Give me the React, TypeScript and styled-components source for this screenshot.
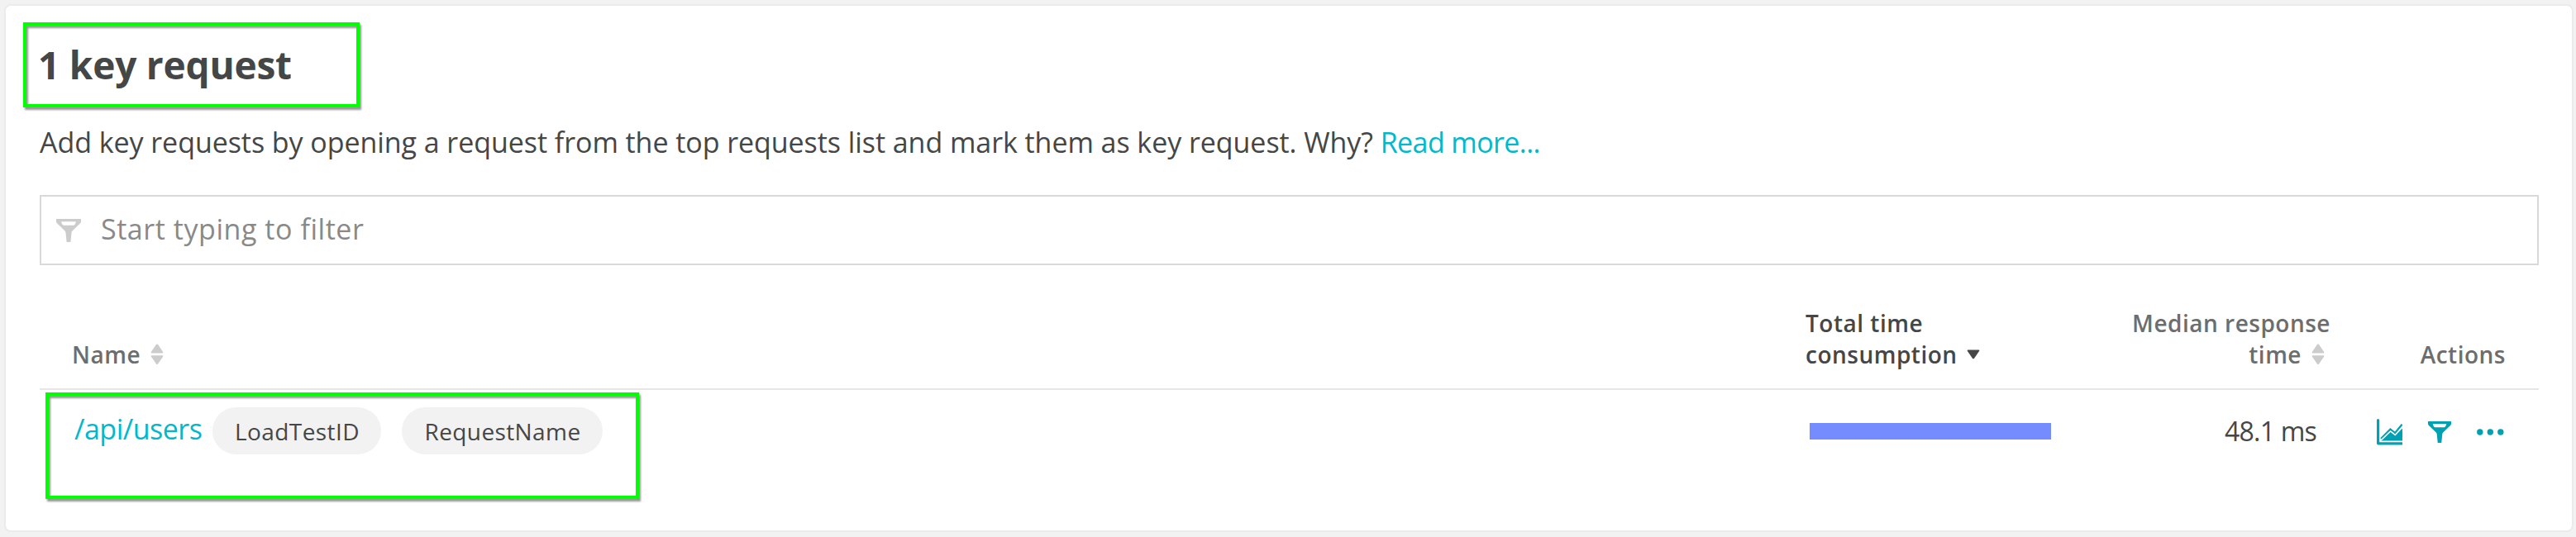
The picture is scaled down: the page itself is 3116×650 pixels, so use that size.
import React from 'react';
import styled, { createGlobalStyle } from 'styled-components';

const GlobalStyle = createGlobalStyle`
  * { box-sizing: border-box; }
  body {
    margin: 0;
    background: #f2f2f2;
    font-family: 'Open Sans', 'Noto Sans', sans-serif;
    color: #454646;
  }
`;

const Page = styled.main`
  height: 650px;
  padding: 5px 3px 6px 5px;
  overflow: hidden;
`;

const Card = styled.section`
  height: 639px;
  border: 2px solid #ebebeb;
  border-radius: 8px;
  background: #fff;
  padding: 41px 40px 0 41px;
`;

const Title = styled.h1`
  position: relative;
  margin: 0;
  text-indent: -2px;
  font-size: 46px;
  font-weight: 700;
  line-height: 60px;
  letter-spacing: -0.2px;
`;

const Intro = styled.p`
  margin: 44px 0 0;
  font-size: 34px;
  line-height: 40px;
  letter-spacing: -0.06px;
  white-space: nowrap;
`;

const Link = styled.a<{ $tracking: number }>`
  color: #00b9cc;
  font-size: 34px;
  text-decoration: none;
  letter-spacing: ${(p) => p.$tracking}px;
`;

const FilterField = styled.div`
  display: flex;
  align-items: center;
  height: 85px;
  margin-top: 44px;
  padding: 0 18px;
  border: 2px solid #d9d9d9;
  color: #898989;
`;

const Placeholder = styled.span`
  margin: 0 0 3px 24px;
  font-size: 34px;
  line-height: 40px;
  letter-spacing: 0.55px;
`;

const Table = styled.div`
  position: relative;
`;

const Row = styled.div`
  display: grid;
  grid-template-columns: 2136px 393px 242px 1fr;
`;

const HeaderRow = styled(Row)`
  align-items: end;
  height: 151px;
  padding-bottom: 22px;
  border-bottom: 2px solid #e6e6e6;
`;

const BodyRow = styled(Row)`
  padding-top: 20px;
  height: 130px;
  align-items: start;
`;

const HeaderCell = styled.div<{ $active?: boolean; $align?: 'right'; $start?: number; $end?: number }>`
  padding-left: ${(p) => p.$start ?? 0}px;
  padding-right: ${(p) => p.$end ?? 0}px;
  font-size: 28px;
  font-weight: 600;
  line-height: 38px;
  letter-spacing: 0.5px;
  white-space: nowrap;
  color: ${(p) => (p.$active ? '#454646' : '#6d6d6d')};
  text-align: ${(p) => p.$align ?? 'left'};
`;

const SortLine = styled.span<{ $align?: 'right'; $gap: number }>`
  display: flex;
  align-items: center;
  gap: ${(p) => p.$gap}px;
  justify-content: ${(p) => (p.$align === 'right' ? 'flex-end' : 'flex-start')};
  padding-right: ${(p) => (p.$align === 'right' ? 7 : 0)}px;
`;

const NameCell = styled.div`
  display: flex;
  align-items: center;
  height: 59px;
  padding-left: 42px;
`;

const RequestLink = styled(Link)`
  width: 167px;
  line-height: 40px;
  margin-bottom: 5px;
`;

const Tag = styled.span<{ $width: number }>`
  display: flex;
  align-items: center;
  justify-content: center;
  width: ${(p) => p.$width}px;
  height: 57px;
  margin-right: 25px;
  padding-left: 1px;
  border-radius: 29px;
  background: #f2f2f2;
  font-size: 28px;
  letter-spacing: 0.4px;
`;

const BarCell = styled.div`
  padding: 20px 0 0 5px;
`;

const Bar = styled.div`
  width: 292px;
  height: 20px;
  background: #748cff;
`;

const ValueCell = styled.div`
  padding: 10px 17px 0 0;
  font-size: 32px;
  line-height: 40px;
  letter-spacing: -0.8px;
  text-align: right;
`;

const ActionsCell = styled.div`
  display: flex;
  align-items: flex-start;
  justify-content: flex-end;
  padding: 15px 42px 0 0;
`;

const FunnelAction = styled.span`
  display: flex;
  margin: 3px 31px 0 31px;
`;

const DotsAction = styled.span`
  display: flex;
  padding-top: 12px;
`;

const Highlight = styled.div<{ $x: number; $y: number; $w: number; $h: number }>`
  position: absolute;
  left: ${(p) => p.$x}px;
  top: ${(p) => p.$y}px;
  width: ${(p) => p.$w}px;
  height: ${(p) => p.$h}px;
  border: 4px solid #00ff00;
  filter: drop-shadow(2px 3px 1px rgba(0, 0, 0, 0.42));
  pointer-events: none;
`;

const Funnel = ({ width, height, color }: { width: number; height: number; color: string }) => (
  <svg width={width} height={height} viewBox="0 0 30 28" preserveAspectRatio="none" fill={color} fillRule="evenodd">
    <path d="M0 0H30V3.2C30 4 29.6 4.7 29 5.3L19.5 14.6C18.9 15.3 18.6 16 18.5 17L17.4 28H12.6L11.5 17C11.4 16 11.1 15.3 10.5 14.6L1 5.3C.4 4.7 0 4 0 3.2ZM6.2 3.2C6.4 5.3 7.5 7.8 9.5 7.8H20.5C22.5 7.8 23.6 5.3 23.8 3.2Z" />
  </svg>
);

const Sorter = () => (
  <svg width="16" height="26" viewBox="0 0 16 26" fill="#ccc">
    <path d="M7.1 .8Q8 0 8.9 .8L15.2 10Q15.8 11.4 14.6 11.4H1.4Q.2 11.4 .8 10Z" />
    <path d="M7.1 24.8Q8 25.6 8.9 24.8L15.2 15.6Q15.8 14.2 14.6 14.2H1.4Q.2 14.2 .8 15.6Z" />
  </svg>
);

const SortedDown = () => (
  <svg width="16" height="12" viewBox="0 0 16 12" fill="#454646">
    <path d="M1.3 .4H14.7Q15.8 .5 15.2 1.7L8.9 10.9Q8 11.8 7.1 10.9L.8 1.7Q.2 .5 1.3 .4Z" />
  </svg>
);

const ChartIcon = () => (
  <svg width="31" height="32" viewBox="0 0 31 32" fill="#00a1b2">
    <path d="M0 1.5Q0 0 1.6 0T3.2 1.5V28.2H31V31.6H1.8Q0 31.6 0 29.8Z" />
    <path d="M5 26.4L16.7 15.4L22.3 20L31 11.2V26.4Z" />
    <path d="M5 24L16.4 12.6L22 17.2L30.6 6.6" fill="none" stroke="#00a1b2" strokeWidth="2.3" />
    <path d="M5 26L16.6 14.9L22.2 19.4L31 10.2" fill="none" stroke="#fff" strokeWidth="1.5" />
  </svg>
);

const Dots = () => (
  <svg width="33" height="8" viewBox="0 0 33 8" fill="#00a1b2">
    <circle cx="3.8" cy="4" r="3.7" />
    <circle cx="16.3" cy="4" r="3.7" />
    <circle cx="28.8" cy="4" r="3.7" />
  </svg>
);

export default function App() {
  return (
    <Page>
      <GlobalStyle />
      <Card>
        <Title>
          1 key request
          <Highlight $x={-20} $y={-21} $w={407} $h={103} />
        </Title>
        <Intro>
          Add key requests by opening a request from the top requests list and mark them as key request. Why?{' '}
          <Link $tracking={-0.6}>Read more...</Link>
        </Intro>
        <FilterField>
          <Funnel width={30} height={28} color="#ccc" />
          <Placeholder>Start typing to filter</Placeholder>
        </FilterField>
        <Table>
          <HeaderRow>
            <HeaderCell $start={39}>
              <SortLine $gap={12}>
                Name <Sorter />
              </SortLine>
            </HeaderCell>
            <HeaderCell $active>
              Total time
              <SortLine $gap={11}>
                consumption <SortedDown />
              </SortLine>
            </HeaderCell>
            <HeaderCell $align="right">
              Median response
              <SortLine $align="right" $gap={12}>
                time <Sorter />
              </SortLine>
            </HeaderCell>
            <HeaderCell $align="right" $end={40}>Actions</HeaderCell>
          </HeaderRow>
          <BodyRow>
            <NameCell>
              <RequestLink $tracking={-0.5}>/api/users</RequestLink>
              <Tag $width={204}>LoadTestID</Tag>
              <Tag $width={243}>RequestName</Tag>
            </NameCell>
            <BarCell>
              <Bar />
            </BarCell>
            <ValueCell>48.1 ms</ValueCell>
            <ActionsCell>
              <ChartIcon />
              <FunnelAction>
                <Funnel width={28} height={26} color="#00a1b2" />
              </FunnelAction>
              <DotsAction>
                <Dots />
              </DotsAction>
            </ActionsCell>
          </BodyRow>
          <Highlight $x={7} $y={154} $w={718} $h={129} />
        </Table>
      </Card>
    </Page>
  );
}
